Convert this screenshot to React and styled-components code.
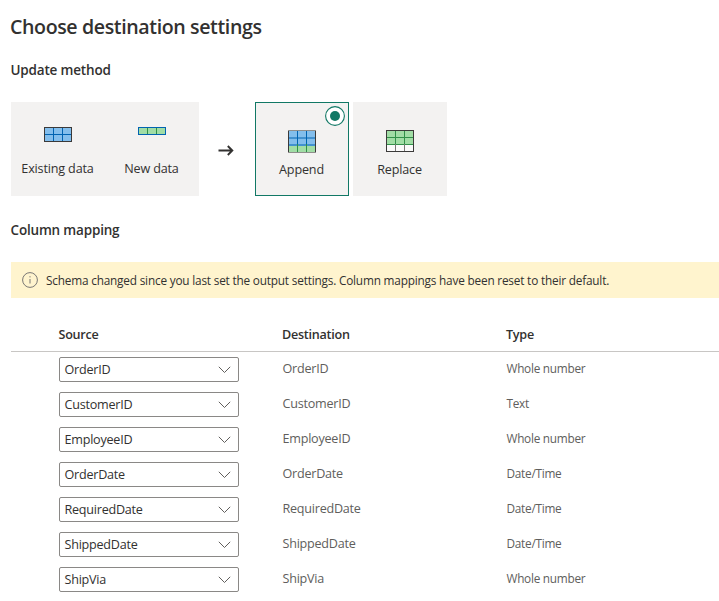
import React from "react";
import styled, { createGlobalStyle } from "styled-components";

const Global = createGlobalStyle`
  * { box-sizing: border-box; }
  body {
    margin: 0;
    background: #fff;
    color: #323130;
    font-family: "Segoe UI", "Open Sans", "Noto Sans", sans-serif;
    overflow: hidden;
  }
`;

const Page = styled.main`
  height: 601px;
  padding: 13px 0 0 11px;
  overflow: hidden;
`;

const Title = styled.h1`
  margin: 0 0 19px -1px;
  height: 28px;
  line-height: 28px;
  font-size: 19.6px;
  font-weight: 600;
  letter-spacing: -0.39px;
`;

const SectionTitle = styled.h2`
  margin: 0 0 0 -0.5px;
  height: 20px;
  line-height: 20px;
  font-size: 13.5px;
  font-weight: 600;
  letter-spacing: -0.18px;
`;

const Methods = styled.section`
  display: flex;
  height: 94px;
  margin: 22px 0 24px;
`;

const DataGroup = styled.div`
  display: flex;
  background: #f3f2f1;
`;

const Tile = styled.div`
  position: relative;
  display: flex;
  flex-direction: column;
  align-items: center;
  width: 94px;
  height: 94px;
  padding-top: ${(p) => (p.$raised ? 25 : 28)}px;
  background: #f3f2f1;
  box-shadow: ${(p) => (p.$selected ? "inset 0 0 0 1px #117865" : "none")};
`;

const TileIcon = styled.div`
  display: flex;
  height: ${(p) => (p.$tall ? 32 : 30)}px;
`;

const TileLabel = styled.span`
  height: 20px;
  margin-right: 1px;
  line-height: 20px;
  font-size: 12.6px;
  letter-spacing: -0.17px;
  white-space: nowrap;
`;

const ArrowSlot = styled.div`
  display: flex;
  align-items: center;
  justify-content: center;
  width: 56px;
  padding: 3px 2px 0 0;
`;

const Options = styled.div`
  display: flex;
  gap: 4px;
`;

const Radio = styled.svg`
  position: absolute;
  top: 4px;
  right: 4px;
`;

const Banner = styled.div`
  display: flex;
  align-items: center;
  gap: 8px;
  height: 36px;
  margin-top: 22px;
  padding-left: 11px;
  background: #fff4ce;
  font-size: 11.8px;
  letter-spacing: -0.19px;
  white-space: nowrap;
`;

const Row = styled.div`
  display: grid;
  grid-template-columns: 223.5px 224px 1fr;
  height: 35px;
  padding: 5px 0 0 48px;
`;

const HeaderRow = styled(Row)`
  height: 34px;
  margin-top: 20px;
  padding: 7px 0 0 47.5px;
  border-bottom: 1px solid #c8c6c4;
  line-height: 20px;
  font-size: 12.6px;
  font-weight: 600;
  letter-spacing: -0.27px;
`;

const Select = styled.button`
  display: flex;
  align-items: center;
  justify-content: space-between;
  width: 180px;
  height: 25px;
  padding: 0 7px 0 4.5px;
  border: 1px solid #8a8886;
  border-radius: 2px;
  background: #fff;
  color: #323130;
  font: inherit;
  font-size: 12.6px;
  letter-spacing: -0.24px;
`;

const Destination = styled.span`
  line-height: 23px;
  font-size: 12.6px;
  letter-spacing: -0.24px;
  color: #605e5c;
`;

const Type = styled(Destination)`
  font-size: 11.8px;
  letter-spacing: -0.26px;
`;

const BLUE = { fill: "#83beec", line: "#0063b1" };
const GREEN = { fill: "#a1dda5", line: "#309048" };
const EMPTY = { fill: "#fafafa", line: "#797774", top: "#309048" };

const TableIcon = ({ height, border, edge = border, bands }) => (
  <svg width="28" height={height} viewBox={`0 0 28 ${height}`} shapeRendering="crispEdges">
    {bands.map((b) => (
      <g key={b.y}>
        <rect x="0" y={b.y} width="28" height={b.h} fill={b.fill} />
        {b.y > 0 && <rect x="0" y={b.y} width="28" height={b.rule || 1} fill={b.top || b.line} />}
        <rect x="9" y={b.y} width="1" height={b.h} fill={b.line} />
        <rect x="18" y={b.y} width="1" height={b.h} fill={b.line} />
      </g>
    ))}
    <path d={`M.5 0V${height}M27.5 0V${height}`} stroke={border} />
    <path d={`M0 .5H28M0 ${height - 0.5}H28`} stroke={edge} />
  </svg>
);

const Chevron = () => (
  <svg width="13" height="8" viewBox="0 0 13 8" fill="none" stroke="#605e5c">
    <path d="M.8.8 6.5 6.5 12.2.8" />
  </svg>
);

const rows = [
  ["OrderID", "Whole number"],
  ["CustomerID", "Text"],
  ["EmployeeID", "Whole number"],
  ["OrderDate", "Date/Time"],
  ["RequiredDate", "Date/Time"],
  ["ShippedDate", "Date/Time"],
  ["ShipVia", "Whole number"],
];

export default function App() {
  return (
    <Page>
      <Global />
      <Title>Choose destination settings</Title>
      <SectionTitle>Update method</SectionTitle>
      <Methods>
        <DataGroup>
          <Tile $raised>
            <TileIcon $tall>
              <TableIcon height={15} border="#3b3a39" bands={[{ y: 0, h: 7, ...BLUE }, { y: 7, h: 8, ...BLUE }]} />
            </TileIcon>
            <TileLabel>Existing data</TileLabel>
          </Tile>
          <Tile $raised>
            <TileIcon $tall>
              <TableIcon height={8} border="#0063b1" bands={[{ y: 0, h: 8, ...GREEN }]} />
            </TileIcon>
            <TileLabel>New data</TileLabel>
          </Tile>
        </DataGroup>
        <ArrowSlot>
          <svg width="16" height="12" viewBox="0 0 16 12" fill="none" stroke="#323130" strokeWidth="1.9">
            <path d="M.5 5.5H14.5M9.8 1l4.5 4.5-4.5 4.5" />
          </svg>
        </ArrowSlot>
        <Options>
          <Tile $selected>
            <TileIcon>
              <TableIcon
                height={23}
                border="#3b3a39"
                edge="#8f8e8c"
                bands={[
                  { y: 0, h: 7, ...BLUE },
                  { y: 7, h: 7, ...BLUE, top: "#4291cf", rule: 2 },
                  { y: 14, h: 9, ...GREEN, top: "#4291cf", rule: 2 },
                ]}
              />
            </TileIcon>
            <TileLabel>Append</TileLabel>
            <Radio width="20" height="20" viewBox="0 0 20 20">
              <circle cx="10" cy="10" r="9.4" fill="#fff" stroke="#117865" strokeWidth="1.1" />
              <circle cx="10" cy="10" r="5" fill="#117865" />
            </Radio>
          </Tile>
          <Tile>
            <TileIcon>
              <TableIcon
                height={22}
                border="#3b3a39"
                bands={[{ y: 0, h: 7, ...GREEN }, { y: 7, h: 7, ...GREEN }, { y: 14, h: 8, ...EMPTY }]}
              />
            </TileIcon>
            <TileLabel>Replace</TileLabel>
          </Tile>
        </Options>
      </Methods>
      <SectionTitle>Column mapping</SectionTitle>
      <Banner>
        <svg width="16" height="16" viewBox="0 0 16 16" fill="none" stroke="#797775">
          <circle cx="8" cy="8" r="7.4" />
          <path d="M8 7v4.5M8 4.2v1.2" />
        </svg>
        <span>Schema changed since you last set the output settings. Column mappings have been reset to their default.</span>
      </Banner>
      <HeaderRow>
        <span>Source</span>
        <span>Destination</span>
        <span>Type</span>
      </HeaderRow>
      {rows.map(([name, type]) => (
        <Row key={name}>
          <Select type="button">
            {name}
            <Chevron />
          </Select>
          <Destination>{name}</Destination>
          <Type>{type}</Type>
        </Row>
      ))}
    </Page>
  );
}
